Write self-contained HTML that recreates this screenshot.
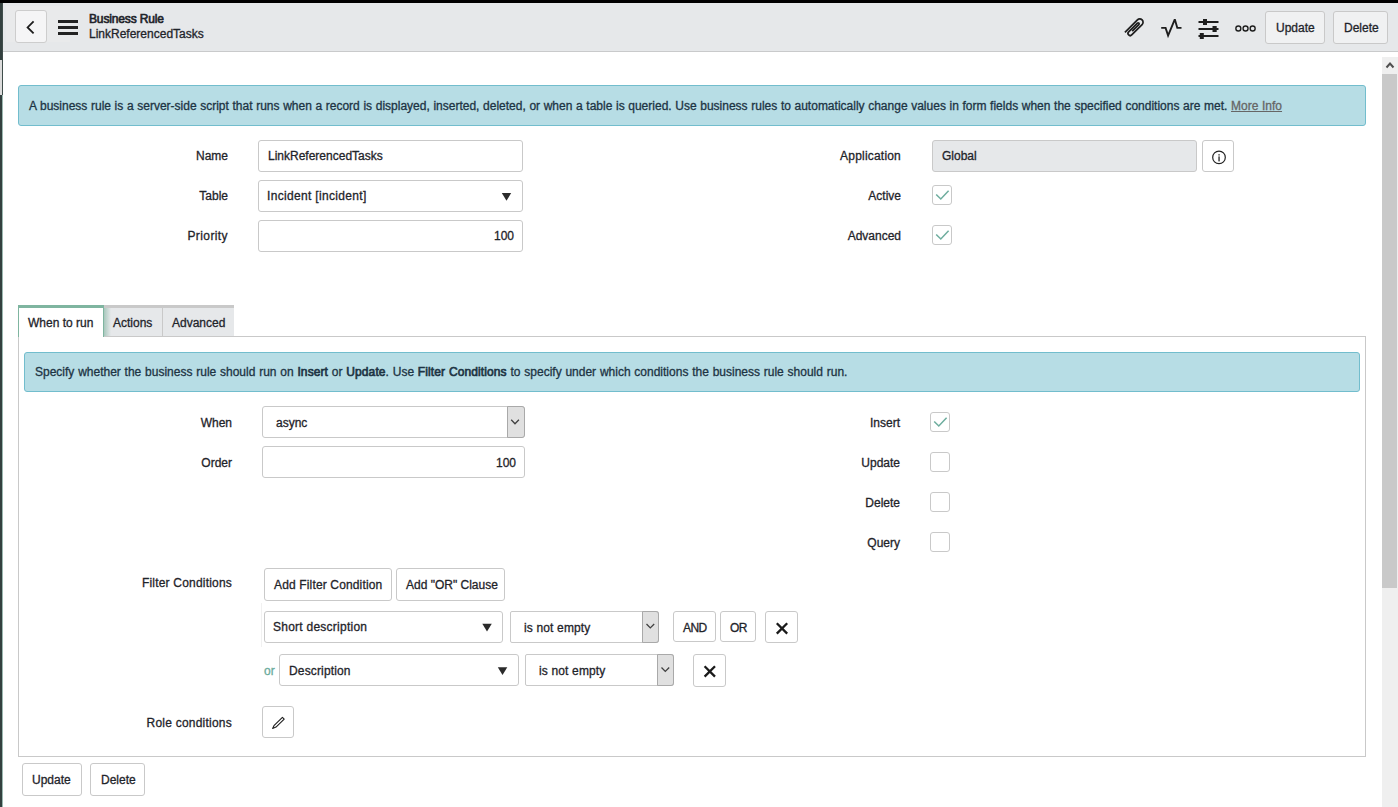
<!DOCTYPE html>
<html><head><meta charset="utf-8">
<style>
*{box-sizing:border-box;margin:0;padding:0}
html,body{width:1398px;height:807px;overflow:hidden;background:#fff}
body{position:relative;font-family:"Liberation Sans",sans-serif;font-size:12px;color:#1f242a;-webkit-text-stroke:0.3px currentColor}
.a{position:absolute}
.t{position:absolute;line-height:14px;white-space:nowrap}
.r{text-align:right}
.b{font-weight:normal;letter-spacing:0.1px;-webkit-text-stroke:0.65px currentColor}
.box{position:absolute;border:1px solid #c9c9c9;border-radius:3px;background:#fff}
.btn{position:absolute;border:1px solid #c9c9c9;border-radius:3px;background:#fff}
.cb{position:absolute;width:20px;height:20px;border:1px solid #c9c9c9;border-radius:3px;background:#fff}
.info{position:absolute;background:#b7dde5;border:1px solid #72bdcd;border-radius:3px}
svg{position:absolute;overflow:visible}
</style></head><body>
<!-- top black band and left dark strip -->
<div class="a" style="left:0;top:0;width:1398px;height:3px;background:#000"></div>
<div class="a" style="left:0;top:3px;width:2px;height:804px;background:#33403f"></div>
<div class="a" style="left:0;top:60px;width:2px;height:35px;background:#dcdcdc"></div>
<div class="a" style="left:2px;top:95px;width:1px;height:712px;background:#9bb8b1"></div>
<div class="a" style="left:2px;top:3px;width:1px;height:92px;background:#3f4d4b"></div>
<!-- header -->
<div class="a" style="left:3px;top:3px;width:1395px;height:49px;background:#e6e8ea;border-bottom:1px solid #c9cacb"></div>
<div class="a" style="left:6px;top:6px;width:64px;height:36px;background:#e9eaeb"></div>
<div class="btn" style="left:15px;top:10px;width:32px;height:33px;background:#f5f5f6;border-color:#cdcdcd"></div>
<svg style="left:0;top:0" width="1" height="1"><path d="M33.6 21.4 L27.6 27.4 L33.6 33.4" fill="none" stroke="#1e1e1e" stroke-width="1.8"/></svg>
<div class="a" style="left:58px;top:20px;width:20px;height:3px;background:#222"></div>
<div class="a" style="left:58px;top:26px;width:20px;height:3px;background:#222"></div>
<div class="a" style="left:58px;top:32px;width:20px;height:3px;background:#222"></div>
<div class="t b" style="left:89px;top:12px;letter-spacing:-0.15px">Business Rule</div>
<div class="t" style="left:89px;top:27px">LinkReferencedTasks</div>

<!-- header icons -->
<svg style="left:0;top:0" width="1" height="1">
 <g fill="none" stroke="#1e1e1e" stroke-width="1.7">
  <path transform="translate(1134.6 27.4) rotate(45)" d="M-3.3 10.4 V-7.3 A3.3 3.3 0 0 1 3.3 -7.3 V7.4 A2.15 2.15 0 0 1 -1 7.4 V-5 A1 1 0 0 1 1 -5 V4.4"/>
 </g>
 <path d="M1161.2 27.9 H1165.6 L1168.1 35.6 L1174.8 19.3 L1177.3 27.9 H1181.5" fill="none" stroke="#1e1e1e" stroke-width="1.9" stroke-linejoin="miter" stroke-miterlimit="3"/>
 <g fill="#1e1e1e">
  <rect x="1198.5" y="21" width="20" height="2"/><rect x="1198.5" y="28" width="20" height="2"/><rect x="1198.5" y="35" width="20" height="2"/>
  <rect x="1203" y="19" width="4" height="6"/><rect x="1212.5" y="26" width="4.2" height="6"/><rect x="1199.8" y="33" width="4" height="6"/>
 </g>
 <g fill="none" stroke="#1e1e1e" stroke-width="1.35"><circle cx="1238.35" cy="28.5" r="2.5"/><circle cx="1245.55" cy="28.5" r="2.5"/><circle cx="1252.65" cy="28.5" r="2.5"/></g>
</svg>
<div class="btn" style="left:1265px;top:11px;width:60px;height:33px;background:#f0f1f2"></div>
<div class="t" style="left:1276px;top:21px">Update</div>
<div class="btn" style="left:1333px;top:11px;width:55px;height:33px;background:#f0f1f2"></div>
<div class="t" style="left:1344px;top:21px">Delete</div>

<!-- scrollbar -->
<div class="a" style="left:1382px;top:57px;width:16px;height:750px;background:#efefef"></div>
<div class="a" style="left:1382px;top:74px;width:15px;height:514px;background:#c9c9c9"></div>
<svg style="left:0;top:0" width="1" height="1"><path d="M1386.5 67.5 L1390 63.5 L1393.5 67.5" fill="none" stroke="#505050" stroke-width="2"/></svg>

<!-- outer info -->
<div class="info" style="left:18px;top:85px;width:1348px;height:41px"></div>
<div class="t" style="left:29px;top:99px;color:#1d3444;word-spacing:0.3px">A business rule is a server-side script that runs when a record is displayed, inserted, deleted, or when a table is queried. Use business rules to automatically change values in form fields when the specified conditions are met. <span style="color:#666;text-decoration:underline">More Info</span></div>


<!-- top form -->
<div class="t r" style="left:128px;width:100px;top:149px">Name</div>
<div class="box" style="left:258px;top:140px;width:265px;height:32px"></div>
<div class="t" style="left:268px;top:149px">LinkReferencedTasks</div>
<div class="t r" style="left:128px;width:100px;top:189px">Table</div>
<div class="box" style="left:258px;top:180px;width:265px;height:32px"></div>
<div class="t" style="left:267px;top:189px;letter-spacing:0.33px">Incident [incident]</div>
<svg style="left:0;top:0" width="1" height="1"><path d="M501.8 193 H511.2 L506.5 200.8 Z" fill="#2b2b2b"/></svg>
<div class="t r" style="left:128px;width:100px;top:229px;letter-spacing:0.4px">Priority</div>
<div class="box" style="left:258px;top:220px;width:265px;height:32px"></div>
<div class="t r" style="left:414px;width:100px;top:229px">100</div>

<div class="t r" style="left:751px;width:150px;top:149px;letter-spacing:0.2px">Application</div>
<div class="box" style="left:932px;top:140px;width:265px;height:32px;background:#e6e8ea"></div>
<div class="t" style="left:942px;top:149px">Global</div>
<div class="btn" style="left:1202px;top:140px;width:32px;height:32px"></div>
<svg style="left:0;top:0" width="1" height="1"><circle cx="1219" cy="157.4" r="6.3" fill="none" stroke="#222" stroke-width="1.2"/><rect x="1218.4" y="156.4" width="1.3" height="5" fill="#222"/><rect x="1218.4" y="154.2" width="1.3" height="1.3" fill="#222"/></svg>
<div class="t r" style="left:751px;width:150px;top:189px">Active</div>
<div class="cb" style="left:932px;top:185px"></div>
<svg style="left:0;top:0" width="1" height="1"><path d="M936.2 194.5 L940.8 199 L948.6 190.8" fill="none" stroke="#6fae9f" stroke-width="1.55"/></svg>
<div class="t r" style="left:751px;width:150px;top:229px">Advanced</div>
<div class="cb" style="left:932px;top:225px"></div>
<svg style="left:0;top:0" width="1" height="1"><path d="M936.2 234.5 L940.8 239 L948.6 230.8" fill="none" stroke="#6fae9f" stroke-width="1.55"/></svg>

<!-- tabs -->
<div class="a" style="left:18px;top:336px;width:1348px;height:421px;border:1px solid #c9c9c9"></div>
<div class="a" style="left:103px;top:305px;width:131px;height:32px;background:#e6e8ea;border-top:3px solid #c9c9c9;border-bottom:1px solid #c9c9c9"></div>
<div class="a" style="left:162px;top:308px;width:1px;height:28px;background:#c9c9c9"></div>
<div class="a" style="left:104px;top:308px;width:7px;height:28px;background:linear-gradient(to right,#a9c8bd,#e6e8ea)"></div>
<div class="a" style="left:18px;top:305px;width:86px;height:32px;background:#fff;border-top:3px solid #7fb5a0;border-left:1px solid #7fb5a0;border-right:1px solid #7fb5a0"></div>
<div class="t" style="left:28px;top:316px">When to run</div>
<div class="t" style="left:113px;top:316px">Actions</div>
<div class="t" style="left:172px;top:316px">Advanced</div>

<div class="info" style="left:24px;top:352px;width:1336px;height:40px"></div>
<div class="t" style="left:35px;top:365px;color:#1d3444;word-spacing:0.45px">Specify whether the business rule should run on <b class="b">Insert</b> or <b class="b">Update</b>. Use <b class="b">Filter Conditions</b> to specify under which conditions the business rule should run.</div>

<div class="t r" style="left:132px;width:100px;top:416px">When</div>
<div class="box" style="left:262px;top:406px;width:263px;height:32px"></div>
<div class="a" style="left:507px;top:406px;width:18px;height:32px;background:#e0e0e0;border:1px solid #a9a9a9;border-radius:0 3px 3px 0"></div>
<svg style="left:0;top:0" width="1" height="1"><path d="M511.2 419.8 L515 423.7 L518.9 419.8" fill="none" stroke="#404040" stroke-width="1.3"/></svg>
<div class="t" style="left:276px;top:416px">async</div>
<div class="t r" style="left:132px;width:100px;top:456px">Order</div>
<div class="box" style="left:262px;top:446px;width:263px;height:32px"></div>
<div class="t r" style="left:416px;width:100px;top:456px">100</div>

<div class="t r" style="left:750px;width:150px;top:416px">Insert</div>
<div class="cb" style="left:930px;top:412px"></div>
<svg style="left:0;top:0" width="1" height="1"><path d="M934.2 421.5 L938.8 426 L946.6 417.8" fill="none" stroke="#6fae9f" stroke-width="1.55"/></svg>
<div class="t r" style="left:750px;width:150px;top:456px">Update</div>
<div class="cb" style="left:930px;top:452px"></div>
<div class="t r" style="left:750px;width:150px;top:496px">Delete</div>
<div class="cb" style="left:930px;top:492px"></div>
<div class="t r" style="left:750px;width:150px;top:536px">Query</div>
<div class="cb" style="left:930px;top:532px"></div>

<div class="t r" style="left:82px;width:150px;top:576px;letter-spacing:0.2px">Filter Conditions</div>
<div class="btn" style="left:264px;top:568px;width:128px;height:33px"></div>
<div class="t" style="left:274px;top:578px;letter-spacing:0.15px">Add Filter Condition</div>
<div class="btn" style="left:396px;top:568px;width:109px;height:33px"></div>
<div class="t" style="left:406px;top:578px">Add "OR" Clause</div>

<div class="a" style="left:261px;top:603px;width:1px;height:44px;background:#f1f1f1"></div>
<div class="box" style="left:264px;top:611px;width:239px;height:32px"></div>
<div class="t" style="left:273px;top:620px;letter-spacing:0.25px">Short description</div>
<svg style="left:0;top:0" width="1" height="1"><path d="M482.3 623.8 H491.8 L487 631.6 Z" fill="#2b2b2b"/></svg>
<div class="box" style="left:510px;top:611px;width:149px;height:32px;border-radius:2px"></div>
<div class="a" style="left:642px;top:611px;width:17px;height:32px;background:#e0e0e0;border:1px solid #a9a9a9;border-radius:0 3px 3px 0"></div>
<svg style="left:0;top:0" width="1" height="1"><path d="M646.5 624 L650.3 627.9 L654.2 624" fill="none" stroke="#404040" stroke-width="1.3"/></svg>
<div class="t" style="left:524px;top:621px;letter-spacing:0.15px">is not empty</div>
<div class="btn" style="left:673px;top:611px;width:43px;height:31px"></div>
<div class="t" style="left:683px;top:621px;letter-spacing:-0.6px">AND</div>
<div class="btn" style="left:720px;top:611px;width:36px;height:31px"></div>
<div class="t" style="left:730px;top:621px;letter-spacing:-0.7px">OR</div>
<div class="btn" style="left:765px;top:611px;width:33px;height:32px"></div>
<svg style="left:0;top:0" width="1" height="1"><path d="M776.8 623.2 L787.2 633.6 M787.2 623.2 L776.8 633.6" fill="none" stroke="#1a1a1a" stroke-width="2.3"/></svg>

<div class="t" style="left:264px;top:664px;color:#6aab9c">or</div>
<div class="box" style="left:279px;top:654px;width:240px;height:32px"></div>
<div class="t" style="left:289px;top:664px;letter-spacing:0.15px">Description</div>
<svg style="left:0;top:0" width="1" height="1"><path d="M497.8 667.3 H507.3 L502.5 675.1 Z" fill="#2b2b2b"/></svg>
<div class="box" style="left:525px;top:654px;width:149px;height:32px;border-radius:2px"></div>
<div class="a" style="left:657px;top:654px;width:17px;height:32px;background:#e0e0e0;border:1px solid #a9a9a9;border-radius:0 3px 3px 0"></div>
<svg style="left:0;top:0" width="1" height="1"><path d="M661.5 667.5 L665.3 671.4 L669.2 667.5" fill="none" stroke="#404040" stroke-width="1.3"/></svg>
<div class="t" style="left:539px;top:664px;letter-spacing:0.15px">is not empty</div>
<div class="btn" style="left:693px;top:654px;width:33px;height:33px"></div>
<svg style="left:0;top:0" width="1" height="1"><path d="M704.6 666.2 L715 676.6 M715 666.2 L704.6 676.6" fill="none" stroke="#1a1a1a" stroke-width="2.3"/></svg>

<div class="t r" style="left:82px;width:150px;top:716px;letter-spacing:0.23px">Role conditions</div>
<div class="btn" style="left:262px;top:706px;width:32px;height:32px"></div>
<svg style="left:0;top:0" width="1" height="1"><path d="M272.6 728.4 L274.2 725.3 L282.4 717.3 L284.2 719.1 L276 727.1 Z" fill="none" stroke="#1e1e1e" stroke-width="1.1" stroke-linejoin="round"/></svg>

<!-- bottom buttons -->
<div class="btn" style="left:22px;top:763px;width:60px;height:33px"></div>
<div class="t" style="left:32px;top:773px">Update</div>
<div class="btn" style="left:90px;top:763px;width:55px;height:33px"></div>
<div class="t" style="left:101px;top:773px">Delete</div>
</body></html>
